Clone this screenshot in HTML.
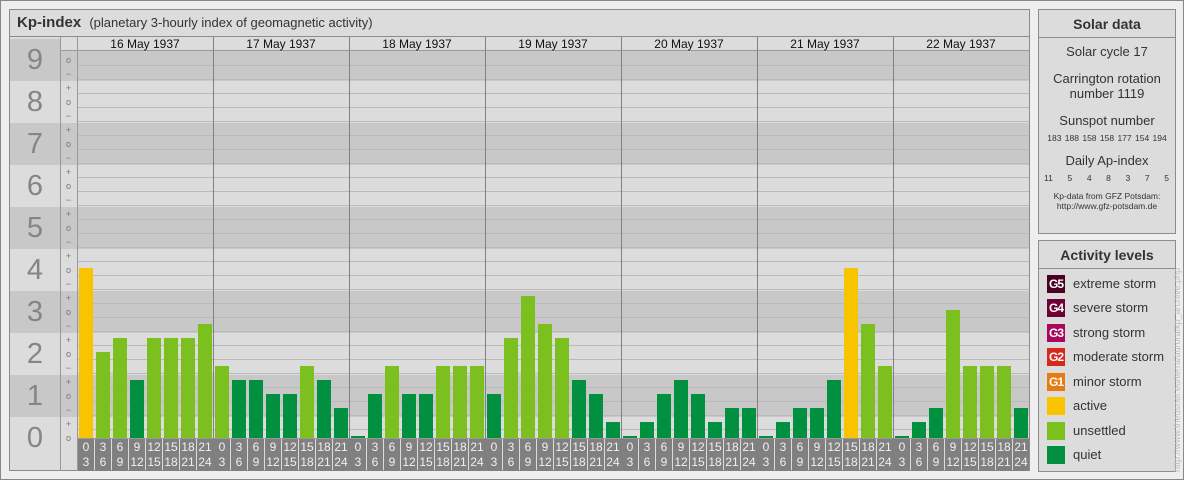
<!DOCTYPE html>
<html><head><meta charset="utf-8"><style>
*{margin:0;padding:0;box-sizing:border-box}
body{width:1184px;height:480px;background:#eeeeee;font-family:"Liberation Sans",Arial,sans-serif;position:relative;overflow:hidden}
.abs{position:absolute}
.panel{position:absolute;background:#dcdcdc;border:1px solid #8c8c8c}
.band{position:absolute;left:0;width:100%;background:#c8c8c8}
.row{position:absolute;display:flex}
.slot{width:17px;height:100%;display:flex;align-items:flex-end}
.bar{margin-left:1px;width:14px}
.q{background:#009040}.u{background:#7cc01f}.a{background:#f8c400}
.ax{width:16px;margin-right:1px;height:32px;background:#808080;color:#f0f0f0;font-size:12px;line-height:15px;text-align:center;padding-top:1px}
.dig{position:absolute;left:0;width:50px;text-align:center;font-size:29px;color:#858585;line-height:30px}
.sym{position:absolute;left:60px;width:17px;text-align:center;font-size:9px;color:#777;line-height:10px}
.vl{position:absolute;width:1px;background:#808080;top:37px;height:433px}
.date{position:absolute;top:37px;width:136px;text-align:center;font-size:12px;line-height:15px;color:#111}
.sd{text-align:center;color:#333;font-size:13px}
.leg{position:absolute;left:8px;font-size:13px;color:#333;line-height:18px}
.leg span{display:inline-block;width:18px;height:18px;color:#fff;font-size:12px;font-weight:bold;text-align:center;margin-right:8px;vertical-align:top;letter-spacing:-1px}
</style></head><body>
<div class="abs" style="left:0;top:0;width:1184px;height:480px;border:1px solid #888"></div>

<div class="panel" style="left:9px;top:9px;width:1021px;height:462px"></div>
<div class="abs" style="left:10px;top:10px;width:1019px;height:27px;border-bottom:1px solid #8c8c8c;background:#dcdcdc"></div>
<div class="abs" style="left:17px;top:14px;font-size:15px;font-weight:bold;color:#333">Kp-index <span style="font-weight:normal;font-size:13px;margin-left:4px">(planetary 3-hourly index of geomagnetic activity)</span></div>

<div class="abs" style="left:10px;top:37px;width:1019px;height:401px;overflow:hidden">
  <div class="band" style="top:2px;height:42px"></div>
  <div class="band" style="top:86px;height:42px"></div>
  <div class="band" style="top:170px;height:42px"></div>
  <div class="band" style="top:254px;height:42px"></div>
  <div class="band" style="top:338px;height:42px"></div>
</div>
<div class="abs" style="left:60px;top:37px;width:969px;height:14px;background:#dcdcdc;border-bottom:1px solid #999"></div>
<div class="abs" style="left:77px;top:52px;width:952px;height:386px;background:repeating-linear-gradient(to bottom,transparent 0 13px,#bababa 13px 14px)"></div>
<div class="abs" style="left:60px;top:37px;width:1px;height:434px;background:#999"></div>
<div class="abs" style="left:77px;top:37px;width:1px;height:434px;background:#999"></div>
<div class="abs" style="left:77px;top:438px;width:952px;height:1px;background:#999"></div>

<div class="dig" style="left:10px;top:45px">9</div>
<div class="dig" style="left:10px;top:87px">8</div>
<div class="dig" style="left:10px;top:129px">7</div>
<div class="dig" style="left:10px;top:171px">6</div>
<div class="dig" style="left:10px;top:213px">5</div>
<div class="dig" style="left:10px;top:255px">4</div>
<div class="dig" style="left:10px;top:297px">3</div>
<div class="dig" style="left:10px;top:339px">2</div>
<div class="dig" style="left:10px;top:381px">1</div>
<div class="dig" style="left:10px;top:423px">0</div>

<div class="sym" style="top:55px">o</div><div class="sym" style="top:69px">−</div>
<div class="sym" style="top:83px">+</div><div class="sym" style="top:97px">o</div><div class="sym" style="top:111px">−</div>
<div class="sym" style="top:125px">+</div><div class="sym" style="top:139px">o</div><div class="sym" style="top:153px">−</div>
<div class="sym" style="top:167px">+</div><div class="sym" style="top:181px">o</div><div class="sym" style="top:195px">−</div>
<div class="sym" style="top:209px">+</div><div class="sym" style="top:223px">o</div><div class="sym" style="top:237px">−</div>
<div class="sym" style="top:251px">+</div><div class="sym" style="top:265px">o</div><div class="sym" style="top:279px">−</div>
<div class="sym" style="top:293px">+</div><div class="sym" style="top:307px">o</div><div class="sym" style="top:321px">−</div>
<div class="sym" style="top:335px">+</div><div class="sym" style="top:349px">o</div><div class="sym" style="top:363px">−</div>
<div class="sym" style="top:377px">+</div><div class="sym" style="top:391px">o</div><div class="sym" style="top:405px">−</div>
<div class="sym" style="top:419px">+</div><div class="sym" style="top:433px">o</div>

<div class="date" style="left:77px">16 May 1937</div>
<div class="date" style="left:213px">17 May 1937</div>
<div class="date" style="left:349px">18 May 1937</div>
<div class="date" style="left:485px">19 May 1937</div>
<div class="date" style="left:621px">20 May 1937</div>
<div class="date" style="left:757px">21 May 1937</div>
<div class="date" style="left:893px">22 May 1937</div>

<div class="row" style="left:78px;top:200px;height:238px">
<div class="slot"><div class="bar a" style="height:170px"></div></div>
<div class="slot"><div class="bar u" style="height:86px"></div></div>
<div class="slot"><div class="bar u" style="height:100px"></div></div>
<div class="slot"><div class="bar q" style="height:58px"></div></div>
<div class="slot"><div class="bar u" style="height:100px"></div></div>
<div class="slot"><div class="bar u" style="height:100px"></div></div>
<div class="slot"><div class="bar u" style="height:100px"></div></div>
<div class="slot"><div class="bar u" style="height:114px"></div></div>

<div class="slot"><div class="bar u" style="height:72px"></div></div>
<div class="slot"><div class="bar q" style="height:58px"></div></div>
<div class="slot"><div class="bar q" style="height:58px"></div></div>
<div class="slot"><div class="bar q" style="height:44px"></div></div>
<div class="slot"><div class="bar q" style="height:44px"></div></div>
<div class="slot"><div class="bar u" style="height:72px"></div></div>
<div class="slot"><div class="bar q" style="height:58px"></div></div>
<div class="slot"><div class="bar q" style="height:30px"></div></div>

<div class="slot"><div class="bar q" style="height:2px"></div></div>
<div class="slot"><div class="bar q" style="height:44px"></div></div>
<div class="slot"><div class="bar u" style="height:72px"></div></div>
<div class="slot"><div class="bar q" style="height:44px"></div></div>
<div class="slot"><div class="bar q" style="height:44px"></div></div>
<div class="slot"><div class="bar u" style="height:72px"></div></div>
<div class="slot"><div class="bar u" style="height:72px"></div></div>
<div class="slot"><div class="bar u" style="height:72px"></div></div>

<div class="slot"><div class="bar q" style="height:44px"></div></div>
<div class="slot"><div class="bar u" style="height:100px"></div></div>
<div class="slot"><div class="bar u" style="height:142px"></div></div>
<div class="slot"><div class="bar u" style="height:114px"></div></div>
<div class="slot"><div class="bar u" style="height:100px"></div></div>
<div class="slot"><div class="bar q" style="height:58px"></div></div>
<div class="slot"><div class="bar q" style="height:44px"></div></div>
<div class="slot"><div class="bar q" style="height:16px"></div></div>

<div class="slot"><div class="bar q" style="height:2px"></div></div>
<div class="slot"><div class="bar q" style="height:16px"></div></div>
<div class="slot"><div class="bar q" style="height:44px"></div></div>
<div class="slot"><div class="bar q" style="height:58px"></div></div>
<div class="slot"><div class="bar q" style="height:44px"></div></div>
<div class="slot"><div class="bar q" style="height:16px"></div></div>
<div class="slot"><div class="bar q" style="height:30px"></div></div>
<div class="slot"><div class="bar q" style="height:30px"></div></div>

<div class="slot"><div class="bar q" style="height:2px"></div></div>
<div class="slot"><div class="bar q" style="height:16px"></div></div>
<div class="slot"><div class="bar q" style="height:30px"></div></div>
<div class="slot"><div class="bar q" style="height:30px"></div></div>
<div class="slot"><div class="bar q" style="height:58px"></div></div>
<div class="slot"><div class="bar a" style="height:170px"></div></div>
<div class="slot"><div class="bar u" style="height:114px"></div></div>
<div class="slot"><div class="bar u" style="height:72px"></div></div>

<div class="slot"><div class="bar q" style="height:2px"></div></div>
<div class="slot"><div class="bar q" style="height:16px"></div></div>
<div class="slot"><div class="bar q" style="height:30px"></div></div>
<div class="slot"><div class="bar u" style="height:128px"></div></div>
<div class="slot"><div class="bar u" style="height:72px"></div></div>
<div class="slot"><div class="bar u" style="height:72px"></div></div>
<div class="slot"><div class="bar u" style="height:72px"></div></div>
<div class="slot"><div class="bar q" style="height:30px"></div></div>
</div>

<div class="row" style="left:78px;top:439px;height:32px">
<div class="ax">0<br>3</div><div class="ax">3<br>6</div><div class="ax">6<br>9</div><div class="ax">9<br>12</div><div class="ax">12<br>15</div><div class="ax">15<br>18</div><div class="ax">18<br>21</div><div class="ax">21<br>24</div>
<div class="ax">0<br>3</div><div class="ax">3<br>6</div><div class="ax">6<br>9</div><div class="ax">9<br>12</div><div class="ax">12<br>15</div><div class="ax">15<br>18</div><div class="ax">18<br>21</div><div class="ax">21<br>24</div>
<div class="ax">0<br>3</div><div class="ax">3<br>6</div><div class="ax">6<br>9</div><div class="ax">9<br>12</div><div class="ax">12<br>15</div><div class="ax">15<br>18</div><div class="ax">18<br>21</div><div class="ax">21<br>24</div>
<div class="ax">0<br>3</div><div class="ax">3<br>6</div><div class="ax">6<br>9</div><div class="ax">9<br>12</div><div class="ax">12<br>15</div><div class="ax">15<br>18</div><div class="ax">18<br>21</div><div class="ax">21<br>24</div>
<div class="ax">0<br>3</div><div class="ax">3<br>6</div><div class="ax">6<br>9</div><div class="ax">9<br>12</div><div class="ax">12<br>15</div><div class="ax">15<br>18</div><div class="ax">18<br>21</div><div class="ax">21<br>24</div>
<div class="ax">0<br>3</div><div class="ax">3<br>6</div><div class="ax">6<br>9</div><div class="ax">9<br>12</div><div class="ax">12<br>15</div><div class="ax">15<br>18</div><div class="ax">18<br>21</div><div class="ax">21<br>24</div>
<div class="ax">0<br>3</div><div class="ax">3<br>6</div><div class="ax">6<br>9</div><div class="ax">9<br>12</div><div class="ax">12<br>15</div><div class="ax">15<br>18</div><div class="ax">18<br>21</div><div class="ax">21<br>24</div>
</div>

<div class="vl" style="left:213px"></div><div class="vl" style="left:349px"></div><div class="vl" style="left:485px"></div>
<div class="vl" style="left:621px"></div><div class="vl" style="left:757px"></div><div class="vl" style="left:893px"></div>

<div class="panel" style="left:1038px;top:9px;width:138px;height:225px">
  <div style="height:28px;border-bottom:1px solid #8c8c8c;text-align:center;font-weight:bold;font-size:14px;line-height:28px;color:#333">Solar data</div>
  <div class="sd" style="margin-top:6px">Solar cycle 17</div>
  <div class="sd" style="margin-top:12px;line-height:15px">Carrington rotation<br>number 1119</div>
  <div class="sd" style="margin-top:12px">Sunspot number</div>
  <div class="sd" style="font-size:8.5px;margin-top:5px;word-spacing:1px">183 188 158 158 177 154 194</div>
  <div class="sd" style="margin-top:10px">Daily Ap-index</div>
  <div style="display:flex;justify-content:space-between;font-size:8.5px;color:#333;padding:0 6px 0 5px;margin-top:5px"><span>11</span><span>5</span><span>4</span><span>8</span><span>3</span><span>7</span><span>5</span></div>
  <div class="sd" style="font-size:8.5px;margin-top:8px;line-height:10px">Kp-data from GFZ Potsdam:<br>http://www.gfz-potsdam.de</div>
</div>

<div class="panel" style="left:1038px;top:240px;width:138px;height:232px">
  <div style="height:28px;border-bottom:1px solid #8c8c8c;text-align:center;font-weight:bold;font-size:14px;line-height:28px;color:#333">Activity levels</div>
  <div class="leg" style="top:34px"><span style="background:#4a0020">G5</span>extreme storm</div>
  <div class="leg" style="top:58px"><span style="background:#6e0038">G4</span>severe storm</div>
  <div class="leg" style="top:83px"><span style="background:#a8085c">G3</span>strong storm</div>
  <div class="leg" style="top:107px"><span style="background:#d8281c">G2</span>moderate storm</div>
  <div class="leg" style="top:132px"><span style="background:#e87a10">G1</span>minor storm</div>
  <div class="leg" style="top:156px"><span style="background:#f8c400"></span>active</div>
  <div class="leg" style="top:181px"><span style="background:#7cc01f"></span>unsettled</div>
  <div class="leg" style="top:205px"><span style="background:#009040"></span>quiet</div>
</div>

<div class="abs" style="left:1172px;top:472px;transform:rotate(-90deg);transform-origin:0 0;font-size:9px;color:#bbb;white-space:nowrap;width:240px">http://www.theusner.eu/terra/aurora/kp_archive.php</div>
</body></html>
